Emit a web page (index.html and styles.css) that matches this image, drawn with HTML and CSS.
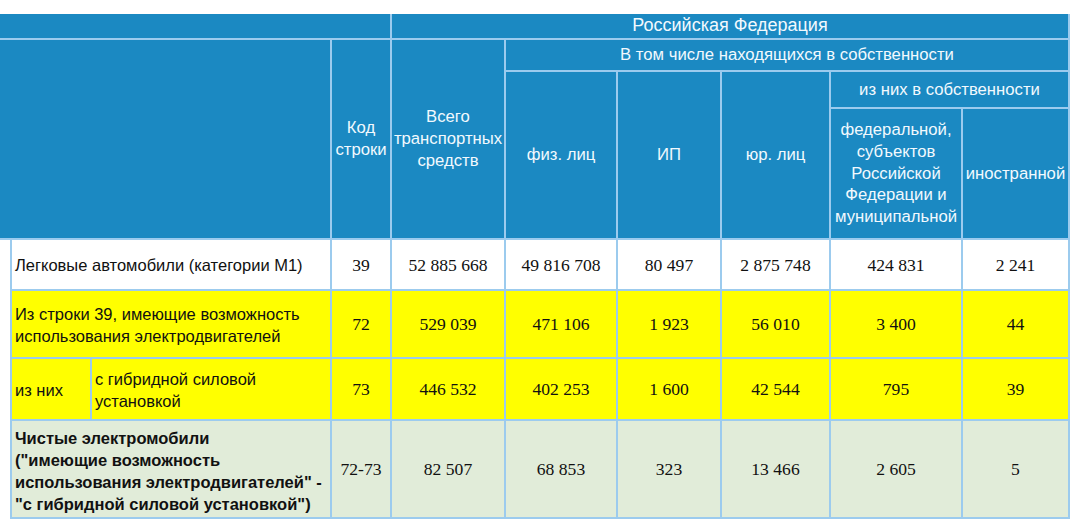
FILE: index.html
```html
<!DOCTYPE html>
<html lang="ru">
<head>
<meta charset="utf-8">
<title>Транспортные средства</title>
<link rel="stylesheet" href="styles.css">
</head>
<body>
<div class="table">
  <div class="h c-blank1"></div>
  <div class="h c-rf">Российская Федерация</div>
  <div class="h c-blank2"></div>
  <div class="h c-kod">Код строки</div>
  <div class="h c-all">Всего транспортных средств</div>
  <div class="h c-vtom">В том числе находящихся в собственности</div>
  <div class="h c-fiz">физ. лиц</div>
  <div class="h c-ip">ИП</div>
  <div class="h c-yur">юр. лиц</div>
  <div class="h c-izn">из них в собственности</div>
  <div class="h c-fed">федеральной, субъектов Российской Федерации и муниципальной</div>
  <div class="h c-ino">иностранной</div>

  <div class="gutter"></div>

  <div class="b white label span2">Легковые автомобили (категории М1)</div>
  <div class="b white num">39</div>
  <div class="b white num">52 885 668</div>
  <div class="b white num">49 816 708</div>
  <div class="b white num">80 497</div>
  <div class="b white num">2 875 748</div>
  <div class="b white num">424 831</div>
  <div class="b white num">2 241</div>

  <div class="b yellow label span2">Из строки 39, имеющие возможность использования электродвигателей</div>
  <div class="b yellow num">72</div>
  <div class="b yellow num">529 039</div>
  <div class="b yellow num">471 106</div>
  <div class="b yellow num">1 923</div>
  <div class="b yellow num">56 010</div>
  <div class="b yellow num">3 400</div>
  <div class="b yellow num">44</div>

  <div class="b yellow label">из них</div>
  <div class="b yellow label">с гибридной силовой установкой</div>
  <div class="b yellow num">73</div>
  <div class="b yellow num">446 532</div>
  <div class="b yellow num">402 253</div>
  <div class="b yellow num">1 600</div>
  <div class="b yellow num">42 544</div>
  <div class="b yellow num">795</div>
  <div class="b yellow num">39</div>

  <div class="b green label bold span2"><span>Чистые электромобили<br>("имеющие возможность<br>использования электродвигателей" -<br>"с гибридной силовой установкой")</span></div>
  <div class="b green num">72-73</div>
  <div class="b green num">82 507</div>
  <div class="b green num">68 853</div>
  <div class="b green num">323</div>
  <div class="b green num">13 466</div>
  <div class="b green num">2 605</div>
  <div class="b green num">5</div>
</div>
</body>
</html>
```

FILE: styles.css
```css
html, body {
  margin: 0;
  padding: 0;
  background: #ffffff;
}

body {
  padding-top: 14px;
  font-family: "Liberation Sans", Arial, sans-serif;
}

.table {
  display: grid;
  width: 1070px;
  box-sizing: border-box;
  padding: 0 2px 2px 0;
  background: #9ccbee;
  grid-template-columns: 10px 78px 238px 58px 112px 110px 102px 107px 130px 105px;
  grid-template-rows: 24px 30px 35px 129px 49px 66px 60px 96px;
  gap: 2px;
}

.h {
  background: #1b89c2;
  color: #f2f9fe;
  font-size: 16.7px;
  line-height: 21.7px;
  display: flex;
  align-items: center;
  justify-content: center;
  text-align: center;
}

.c-blank1 { grid-column: 1 / 5; grid-row: 1; }
.c-rf { grid-column: 5 / 11; grid-row: 1; font-size: 18px; }
.c-blank2 { grid-column: 1 / 4; grid-row: 2 / 5; }
.c-kod { grid-column: 4; grid-row: 2 / 5; }
.c-all { grid-column: 5; grid-row: 2 / 5; }
.c-vtom { grid-column: 6 / 11; grid-row: 2; }
.c-fiz { grid-column: 6; grid-row: 3 / 5; }
.c-ip { grid-column: 7; grid-row: 3 / 5; }
.c-yur { grid-column: 8; grid-row: 3 / 5; }
.c-izn { grid-column: 9 / 11; grid-row: 3; }
.c-fed { grid-column: 9; grid-row: 4; padding: 0 2px; }
.c-ino { grid-column: 10; grid-row: 4; }

.gutter {
  grid-column: 1;
  grid-row: 5 / 9;
  background: #ffffff;
  margin-bottom: -2px;
}

.b {
  display: flex;
  align-items: center;
  color: #111111;
}

.white { background: #ffffff; }
.yellow { background: #ffff00; }
.green { background: #e1ecd9; }

.label {
  font-family: "Liberation Sans", Arial, sans-serif;
  font-size: 16.5px;
  line-height: 22px;
  padding: 1px 3px 0;
}

.span2 { grid-column: 2 / 4; }

.bold {
  font-weight: bold;
  font-size: 16.5px;
  white-space: nowrap;
  padding: 3px 0 0 3px;
}

.num {
  justify-content: center;
  font-family: "Liberation Serif", "Times New Roman", serif;
  font-size: 17.6px;
  padding-top: 1px;
}
```
